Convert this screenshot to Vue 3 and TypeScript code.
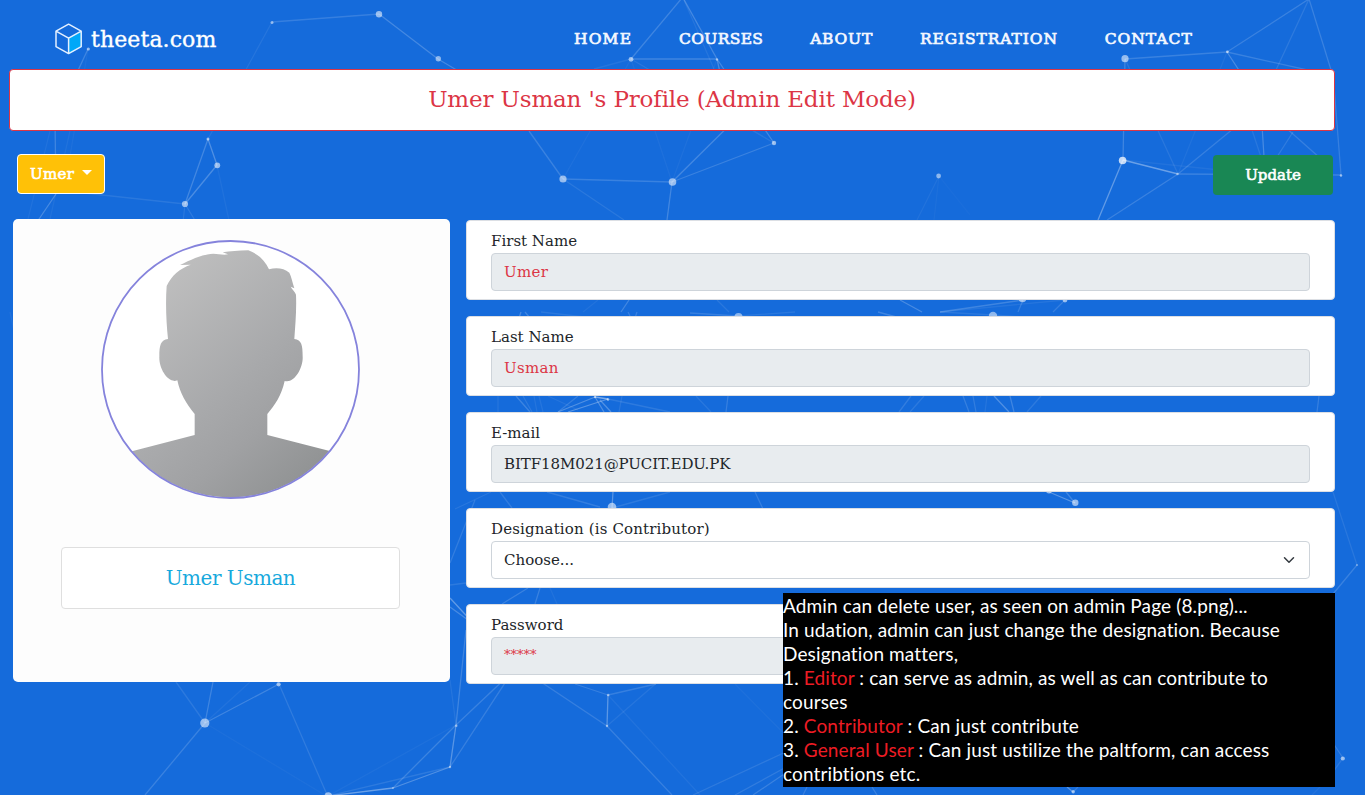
<script setup lang="ts">
interface Line { x1: number; y1: number; x2: number; y2: number; o: number }
interface Dot { x: number; y: number; r: number; o: number }
interface Field { label: string; value: string; kind: 'name' | 'plain' | 'select' | 'secret' }

const nav: { text: string; cls: string }[] = [
  { text: 'HOME', cls: 'home' },
  { text: 'COURSES', cls: 'courses' },
  { text: 'ABOUT', cls: 'about' },
  { text: 'REGISTRATION', cls: 'registration' },
  { text: 'CONTACT', cls: 'contact' },
]

const fields: Field[] = [
  { label: 'First Name', value: 'Umer', kind: 'name' },
  { label: 'Last Name', value: 'Usman', kind: 'name' },
  { label: 'E-mail', value: 'BITF18M021@PUCIT.EDU.PK', kind: 'plain' },
  { label: 'Designation (is Contributor)', value: 'Choose...', kind: 'select' },
  { label: 'Password', value: '*****', kind: 'secret' },
]

const raw: number[][] = [
  [272, 22, 379, 14, 0.2], [379, 14, 438, 59, 0.28], [438, 59, 563, 179, 0.2], [272, 22, 208, 139, 0.1],
  [88, 49, 55, 120, 0.25], [55, 120, 56, 194, 0.25], [50, 131, 28, 219, 0.07], [70, 131, 50, 219, 0.07], [88, 49, 66, 180, 0.06],
  [56, 194, 37, 222, 0.3], [56, 190, 185, 204, 0.13], [208, 139, 185, 204, 0.27], [208, 139, 217, 165, 0.35],
  [217, 165, 185, 204, 0.32], [217, 165, 230, 225, 0.07], [185, 204, 196, 222, 0.15], [185, 204, 183, 222, 0.12],
  [682, -2, 631, 59, 0.25], [682, -4, 717, 59, 0.28], [631, 59, 717, 59, 0.25], [631, 59, 594, 69, 0.1],
  [631, 59, 672, 182, 0.06], [631, 59, 774, 143, 0.12], [717, 59, 724, 90, 0.3], [717, 59, 774, 143, 0.28],
  [684, 0, 714, 69, 0.1], [717, 59, 672, 182, 0.06], [563, 179, 672, 182, 0.22], [563, 179, 631, 59, 0.06],
  [529, 131, 563, 179, 0.22],
  [672, 182, 774, 143, 0.22], [672, 182, 760, 95, 0.28], [672, 182, 667, 220, 0.27], [563, 179, 624, 220, 0.13],
  [1125, 59, 1227, 52, 0.22], [1227, 52, 1309, -1, 0.22], [1227, 52, 1330, 75, 0.22], [1227, 52, 1275, 125, 0.3],
  [1309, -1, 1332, 73, 0.22], [1309, -1, 1276, 70, 0.15], [1125, 59, 1123, 160, 0.25],
  [1125, 59, 1178, 174, 0.12], [1227, 52, 1178, 174, 0.07], [1123, 160, 1178, 174, 0.5],
  [1178, 174, 1341, 175, 0.23], [1178, 174, 1250, 115, 0.2], [1123, 160, 1098, 220, 0.45], [1178, 174, 1107, 220, 0.22],
  [1123, 160, 1220, 170, 0.08], [1262, 125, 1264, 157, 0.3], [1252, 130, 1262, 160, 0.12], [1293, 132, 1275, 160, 0.17],
  [1285, 127, 1320, 158, 0.2], [1333, 73, 1341, 175, 0.2], [939, 176, 917, 220, 0.08], [939, 176, 934, 220, 0.05], [939, 176, 970, 215, 0.03],
  [10, 312, 16, 340, 0.08], [598, 300, 583, 312, 0.08], [629, 300, 621, 312, 0.27], [717, 300, 729, 312, 0.13],
  [900, 300, 922, 312, 0.3], [1023, 300, 940, 312, 0.25], [1065, 300, 940, 312, 0.1], [1023, 300, 1018, 312, 0.2],
  [1065, 300, 1053, 312, 0.2], [521, 312, 519, 318, 0.3], [525, 312, 530, 318, 0.25], [541, 312, 585, 317, 0.12],
  [628, 312, 631, 318, 0.2], [637, 312, 635, 318, 0.2], [738, 316, 690, 313, 0.2], [738, 316, 795, 312, 0.12],
  [878, 312, 900, 318, 0.25], [940, 312, 993, 315, 0.13], [993, 315, 1040, 318, 0.15],
  [498, 396, 498, 412, 0.1], [516, 396, 530, 412, 0.24], [523, 396, 532, 412, 0.15], [534, 396, 537, 412, 0.1], [539, 396, 543, 412, 0.1],
  [548, 396, 578, 410, 0.1], [578, 396, 558, 412, 0.2], [595, 397, 558, 412, 0.35], [595, 397, 608, 399, 0.6],
  [608, 399, 568, 412, 0.4], [595, 397, 604, 412, 0.35], [600, 400, 611, 412, 0.35], [608, 399, 670, 412, 0.15], [622, 396, 619, 412, 0.12],
  [696, 396, 711, 412, 0.12], [728, 396, 726, 412, 0.2], [911, 396, 899, 412, 0.18], [924, 396, 910, 412, 0.14],
  [963, 396, 969, 412, 0.2], [973, 396, 976, 412, 0.18], [987, 396, 985, 412, 0.1], [994, 396, 1009, 412, 0.35],
  [1010, 396, 1014, 412, 0.25], [1041, 396, 1027, 412, 0.15], [1319, 396, 1317, 412, 0.2],
  [491, 492, 455, 509, 0.12], [500, 492, 512, 508, 0.18], [547, 492, 600, 507, 0.18], [613, 492, 612, 508, 0.4],
  [670, 492, 612, 508, 0.15], [755, 492, 763, 509, 0.2], [1049, 492, 1075, 503, 0.4], [1066, 492, 1075, 503, 0.25],
  [1333, 492, 1357, 565, 0.12], [1357, 565, 1333, 594, 0.22], [450, 563, 475, 500, 0.18], [450, 585, 466, 583, 0.15],
  [450, 598, 475, 625, 0.45], [450, 607, 475, 625, 0.3], [528, 588, 502, 604, 0.22], [540, 588, 535, 604, 0.22], [550, 588, 557, 604, 0.08],
  [176, 682, 205, 723, 0.14], [213, 682, 205, 723, 0.25], [250, 682, 205, 723, 0.08], [279, 684, 205, 723, 0.25],
  [205, 723, 145, 795, 0.22], [279, 684, 328, 797, 0.16], [205, 723, 328, 797, 0.05], [328, 796, 393, 788, 0.5],
  [393, 788, 450, 767, 0.35], [328, 796, 450, 767, 0.15], [393, 788, 456, 725, 0.24], [456, 725, 450, 767, 0.4],
  [450, 767, 520, 660, 0.2], [328, 796, 456, 725, 0.06], [450, 680, 456, 725, 0.1], [466, 630, 456, 725, 0.25],
  [456, 725, 510, 674, 0.22], [541, 682, 607, 726, 0.2], [575, 684, 608, 695, 0.2], [608, 695, 607, 726, 0.42],
  [608, 695, 656, 684, 0.2], [608, 695, 700, 795, 0.08], [607, 726, 672, 795, 0.2], [607, 726, 660, 680, 0.1],
  [735, 684, 820, 770, 0.06], [753, 795, 790, 770, 0.22], [693, 795, 790, 750, 0.15], [735, 795, 790, 765, 0.17],
  [807, 787, 803, 795, 0.2], [872, 787, 877, 795, 0.22], [1067, 787, 1073, 792, 0.4], [1078, 787, 1073, 792, 0.2],
  [1333, 743, 1343, 758, 0.2], [1343, 758, 1333, 772, 0.14], [1320, 787, 1312, 795, 0.08],
].filter(([x1, y1, x2]) => !(x1 === 438 && y1 === 59 && x2 === 563))
const lines: Line[] = [[438, 59, 460, 72, 0.28], ...raw].map(([x1, y1, x2, y2, o]) => ({ x1, y1, x2, y2, o }))

const rawDots: number[][] = [
  [272, 22.5, 1.5, 0.55], [379, 14.3, 3.2, 0.6], [438.3, 58.7, 2.7, 0.55], [88.3, 49, 1.6, 0.6], [208, 139, 1.5, 0.6],
  [217.3, 165.3, 2.9, 0.6], [185, 204, 3.1, 0.6], [56, 191, 3.1, 0.55], [631, 59.3, 2.4, 0.6], [717, 59.5, 1.2, 0.5],
  [774, 143, 2.2, 0.6], [563, 179, 3.6, 0.6], [672.5, 182, 3.8, 0.6], [938.6, 176, 2.4, 0.55], [1125, 58.7, 3.6, 0.6],
  [1227.4, 51.8, 1.4, 0.65], [1122.6, 160.5, 3.8, 0.8], [1177.5, 174, 1.3, 0.4], [1341, 175.5, 1.2, 0.6],
  [1022.5, 298.5, 3.8, 0.6], [1065, 300, 2.4, 0.6], [738.5, 317, 4, 0.55], [993, 316, 4.2, 0.55], [595, 397, 1.2, 0.6],
  [608, 399.5, 1.3, 0.6], [612, 507, 4.3, 0.6], [1049, 490.5, 3, 0.6], [1075.3, 502.8, 3.2, 0.6], [1357, 565, 1.1, 0.4],
  [204.8, 723, 4.6, 0.6], [278.6, 684.3, 2.1, 0.6], [328.3, 796, 3.7, 0.6], [393, 788, 1, 0.4], [450, 767, 1.2, 0.5],
  [456.3, 725.8, 1.2, 0.5], [608.2, 695, 1.3, 0.5], [607, 726, 1.2, 0.5], [1073.2, 791.7, 1.7, 0.6], [1342.8, 758.5, 2.1, 0.6],
]
const dots: Dot[] = rawDots.map(([x, y, r, o]) => ({ x, y, r, o: o * 0.93 }))
</script>

<template>
  <div class="page">
    <svg class="network" viewBox="0 0 1365 795" aria-hidden="true">
      <g opacity="0.72">
        <line v-for="(l, i) in lines" :key="'l' + i" :x1="l.x1" :y1="l.y1" :x2="l.x2" :y2="l.y2" stroke="#fff" stroke-width="1.3" :stroke-opacity="l.o" />
      </g>
      <circle v-for="(d, i) in dots" :key="'d' + i" :cx="d.x" :cy="d.y" :r="d.r" fill="#fff" :fill-opacity="d.o" />
    </svg>

    <header class="header">
      <div class="brand">
        <svg class="cube" viewBox="0 0 28 32" aria-hidden="true">
          <path d="M14 15.1 26.6 8.1V23.6L14 30.6Z" fill="#00a8f8" />
          <path d="M13.6 1.2 26.2 8.1V23.6L13.6 30.6 1 23.6V8.1ZM1 8.1 13.6 15.1 26.2 8.1M13.6 15.1V30.6" fill="none" stroke="#e4f0ff" stroke-width="1.5" stroke-linejoin="round" />
        </svg>
        <span class="brand-name">theeta.com</span>
      </div>
      <nav class="nav">
        <a v-for="n in nav" :key="n.text" :class="n.cls">{{ n.text }}</a>
      </nav>
    </header>

    <h1 class="title"><span>Umer Usman 's Profile (Admin Edit Mode)</span></h1>

    <div class="toolbar">
      <button class="user-btn"><span>Umer</span><i class="caret"></i></button>
      <button class="update-btn">Update</button>
    </div>

    <main class="main">
      <section class="profile">
        <svg class="avatar" viewBox="303 90 777 777" role="img" aria-label="Profile photo">
          <defs>
            <linearGradient id="skin" gradientUnits="userSpaceOnUse" x1="400" y1="230" x2="900" y2="800">
              <stop offset="0" stop-color="#c0c0c0" />
              <stop offset="0.55" stop-color="#a8a9ab" />
              <stop offset="0.75" stop-color="#a0a1a3" />
              <stop offset="1" stop-color="#929495" />
            </linearGradient>
            <clipPath id="round"><circle cx="691.5" cy="478.5" r="384" /></clipPath>
          </defs>
          <circle cx="691.5" cy="478.5" r="385" fill="#fff" />
          <path clip-path="url(#round)" fill="url(#skin)" d="M500 228C515 195 540 176 572 164L540 165C575 148 610 132 640 131C655 131 668 136 684 133L668 127C690 123 715 122 745 121C775 132 795 152 807 178C830 172 852 175 868 188C874 200 878 218 883 235L872 230C876 239 886 245 888 254C890 300 886 345 883 387C905 390 908 405 908 440C910 475 882 522 854 513C845 555 825 585 802 612V675L1100 751V900H290V751L584 675V612C558 580 540 550 532 511C504 522 476 475 478 440C478 405 482 390 504 387C499 340 496 280 500 228Z" />
          <circle cx="691.5" cy="478.5" r="385.5" fill="none" stroke="#8583dc" stroke-width="5.4" />
        </svg>
        <div class="full-name">Umer Usman</div>
      </section>

      <section class="form">
        <div v-for="f in fields" :key="f.label" class="field">
          <label :class="f.kind">{{ f.label }}</label>
          <div class="control" :class="f.kind">
            <span>{{ f.value }}</span>
            <svg v-if="f.kind === 'select'" class="chevron" viewBox="0 0 16 16" aria-hidden="true">
              <path d="m2 5 6 6 6-6" fill="none" stroke="#343a40" stroke-width="2" stroke-linecap="round" stroke-linejoin="round" />
            </svg>
          </div>
        </div>
      </section>
    </main>

    <aside class="note">
      <p>Admin can delete user, as seen on admin Page (8.png)...</p>
      <p>In udation, admin can just change the designation. Because<br>Designation matters,</p>
      <p>1. <b>Editor</b> : can serve as admin, as well as can contribute to<br>courses</p>
      <p>2. <b>Contributor</b> : Can just contribute</p>
      <p>3. <b>General User</b> : Can just ustilize the paltform, can access<br>contribtions etc.</p>
    </aside>
  </div>
</template>

<style>
body { margin: 0; background: #156bdb; }
</style>

<style scoped>
* { box-sizing: border-box; }
.page {
  position: relative; height: 795px; width: 1365px; overflow: hidden; background: #156bdb; color: #212529;
  font-family: "DejaVu Serif", serif; font-size: 15px;
}
.network { position: absolute; inset: 0; width: 1365px; height: 795px; }
.header { position: relative; display: flex; height: 69px; padding-left: 55px; }
.brand { display: flex; width: 519px; padding-top: 23px; }
.cube { width: 28px; height: 32px; flex: none; }
.brand-name { margin-left: 8px; font-size: 22px; line-height: 34px; letter-spacing: 0.1px; color: #fff; -webkit-text-stroke: 0.35px #fff; white-space: nowrap; }
.nav { display: flex; gap: 46.8px; padding-top: 29px; line-height: 20px; font-size: 15.5px; color: #f3f8ff; -webkit-text-stroke: 0.7px #f3f8ff; }
.home { letter-spacing: 1.2px; }
.courses { letter-spacing: 0.35px; }
.about { letter-spacing: 0.8px; }
.registration { letter-spacing: 0.9px; }
.contact { letter-spacing: 1px; }
.title {
  position: relative; display: flex; align-items: center; justify-content: center; height: 62px; width: 1326px; margin: 0 0 0 9px; padding-bottom: 2px;
  border: 1px solid #dc3545; border-radius: 4px; background: #fff; color: #dc3545; font-size: 23px; font-weight: 400; letter-spacing: -0.15px; white-space: nowrap;
}
.toolbar { position: relative; display: flex; justify-content: space-between; align-items: flex-start; padding: 23px 32px 0 17px; height: 88px; }
button { font-family: inherit; height: 40px; border-radius: 4px; color: #fff; font-size: 15px; padding: 0; -webkit-text-stroke: 0.6px #fff; }
.user-btn { display: flex; align-items: center; gap: 8px; width: 88px; padding-left: 12px; border: 1px solid #fff; background: #ffc107; letter-spacing: 0.3px; }
.caret { border: 5px solid transparent; border-top-color: #fff; border-bottom: 0; margin-top: -4px; }
.update-btn { width: 120px; margin-top: 1px; border: 0; background: #198754; }
.main { position: relative; display: flex; align-items: flex-start; gap: 16px; padding-left: 13px; }
.profile { display: flex; flex-direction: column; align-items: center; width: 437px; height: 463px; padding: 21px 2px 0 0; background: #fdfdfd; border-radius: 5px; }
.avatar { width: 259px; height: 259px; flex: none; }
.full-name { width: 339px; height: 62px; margin-top: 48px; line-height: 60px; text-align: center; font-size: 20px; letter-spacing: -0.5px; color: #17a9dd; border: 1px solid #dfdfdf; border-radius: 4px; background: #fff; }
.form { display: flex; flex-direction: column; gap: 16px; width: 869px; padding-top: 1px; }
.field { height: 80px; padding: 9px 24px 0; border: 1px solid #dcdfe4; border-radius: 4px; background: #fff; }
.field label { display: block; height: 23px; line-height: 22px; letter-spacing: 0; }
.field label.select { letter-spacing: 0.15px; }
.control { display: flex; align-items: center; justify-content: space-between; height: 38px; padding: 0 12px; border: 1px solid #ced4da; border-radius: 4px; background: #e8ecef; }
.control.name, .control.secret { color: #dc3545; }
.control.name { letter-spacing: 0.3px; }
.control.plain { letter-spacing: -0.08px; }
.control.secret { padding-bottom: 3px; font-size: 13px; }
.control.select { background: #fff; }
.chevron { width: 12px; height: 12px; margin-right: 2px; }
.note { position: absolute; left: 783px; top: 593px; width: 552px; height: 194px; padding-top: 1px; background: #000; color: #fff; font: 19px/24px Lato, sans-serif; letter-spacing: 0.13px; font-variant-ligatures: none; white-space: nowrap; }
.note p { margin: 0; }
.note b { font-weight: 400; color: #ed1c24; }
</style>
